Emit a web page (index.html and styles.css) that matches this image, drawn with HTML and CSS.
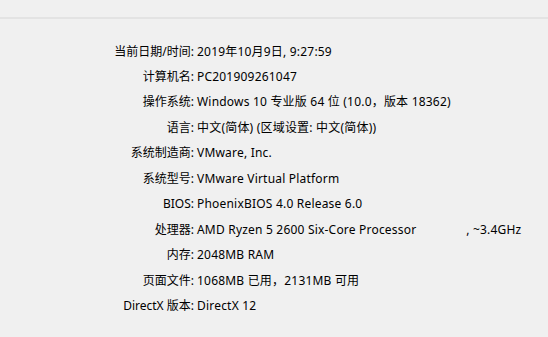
FILE: index.html
```html
<!DOCTYPE html>
<html lang="zh-CN">
<head>
    <meta charset="UTF-8">
    <title>系统信息</title>
    <link rel="stylesheet" href="styles.css">
</head>
<body>
    <div class="top-bar"></div>
    <div class="divider"></div>

    <!-- 系统信息 -->
    <section class="sys-info">
        <div class="label">当前日期/时间:</div><div class="value">2019年10月9日, 9:27:59</div>
        <div class="label">计算机名:</div><div class="value">PC201909261047</div>
        <div class="label">操作系统:</div><div class="value">Windows 10 专业版 64 位 (10.0，版本 18362)</div>
        <div class="label">语言:</div><div class="value">中文(简体) (区域设置: 中文(简体))</div>
        <div class="label">系统制造商:</div><div class="value">VMware, Inc.</div>
        <div class="label">系统型号:</div><div class="value">VMware Virtual Platform</div>
        <div class="label">BIOS:</div><div class="value">PhoenixBIOS 4.0 Release 6.0</div>
        <div class="label">处理器:</div><div class="value cpu">AMD Ryzen 5 2600 Six-Core Processor               , ~3.4GHz</div>
        <div class="label">内存:</div><div class="value">2048MB RAM</div>
        <div class="label">页面文件:</div><div class="value">1068MB 已用，2131MB 可用</div>
        <div class="label">DirectX 版本:</div><div class="value">DirectX 12</div>
    </section>
</body>
</html>
```

FILE: styles.css
```css
* {
    margin: 0;
    padding: 0;
    box-sizing: border-box;
}

body {
    font-family: 'Noto Sans', 'Noto Sans CJK SC', sans-serif;
    font-size: 12px;
    background: #f0f0f0;
    color: #000;
}

.top-bar {
    height: 17px;
}

.divider {
    height: 2px;
    background: #e3e3e3;
}

/* Info grid */
.sys-info {
    display: grid;
    grid-template-columns: 194px auto;
    column-gap: 3px;
    padding-top: 19.5px;
    line-height: 25.45px;
}

.label {
    text-align: right;
    white-space: nowrap;
}

.value {
    white-space: nowrap;
    letter-spacing: 0.2px;
}

.cpu {
    white-space: pre;
}
```
